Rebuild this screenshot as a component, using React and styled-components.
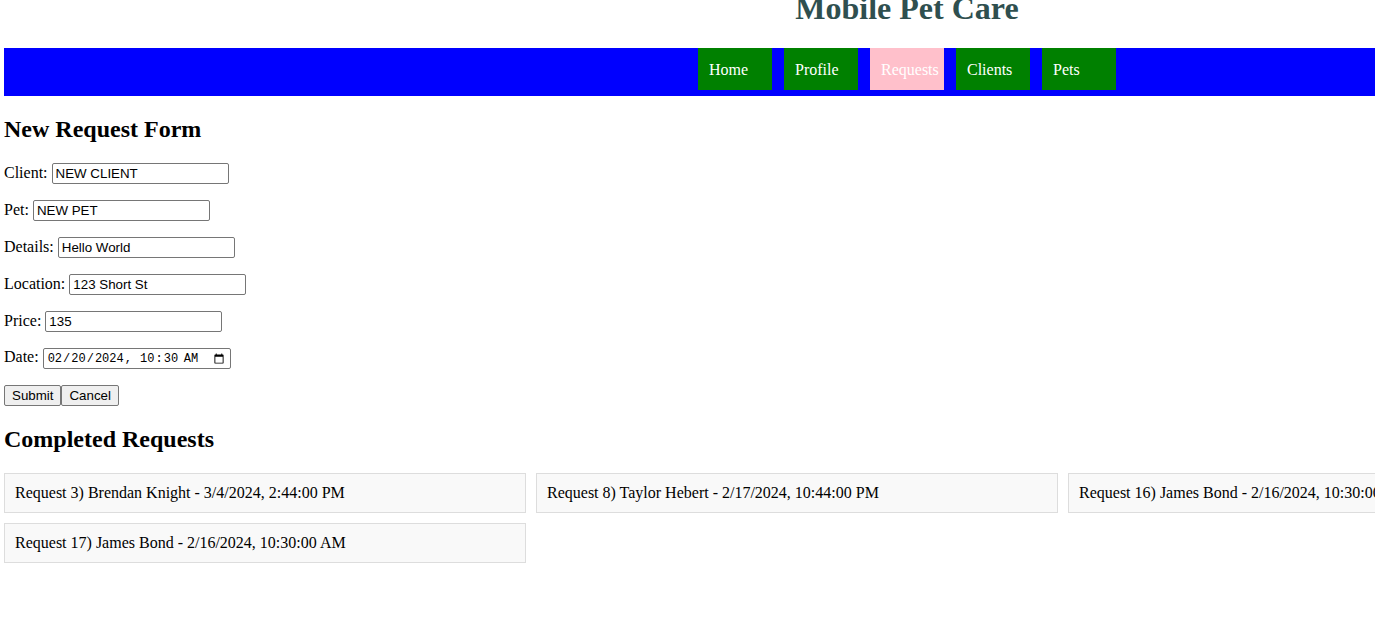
import React from "react";
import styled, { createGlobalStyle } from "styled-components";

const Global = createGlobalStyle`
  html { overflow: hidden; }
  body {
    margin: 0;
    padding: 0 0 0 4px;
    font-family: "Liberation Serif", "Times New Roman", serif;
    font-size: 16px;
    color: #000;
    background: #fff;
  }
`;

const Page = styled.div`
  width: 1806px;
`;

const Title = styled.h1`
  margin: -10px 0 21px;
  font-size: 32px;
  font-weight: bold;
  text-align: center;
  color: #2f4f4f;
`;

const NavBar = styled.nav`
  display: flex;
  justify-content: center;
  gap: 12px;
  height: 48px;
  background: #0000ff;
`;

const NavItem = styled.a`
  display: flex;
  align-items: center;
  box-sizing: border-box;
  width: 74px;
  height: 42px;
  padding: 2px 0 0 11px;
  white-space: nowrap;
  overflow: hidden;
  color: #fff;
  text-decoration: none;
  background: ${(p) => (p.$active ? "#ffc0cb" : "#008000")};
`;

const Heading = styled.h2`
  font-size: 24px;
  font-weight: bold;
  margin: 19.92px 0;
`;

const Row = styled.p`
  margin: 16px 0;
`;

const Input = styled.input`
  box-sizing: border-box;
  width: ${(p) => p.$w || 177}px;
  height: 21px;
  padding: 1px 3px;
  border: 1px solid #767676;
  border-radius: 2px;
  font-family: ${(p) => (p.$mono ? '"Liberation Mono", monospace' : '"Liberation Sans", Arial, sans-serif')};
  font-size: ${(p) => (p.$mono ? "12px" : "13.33px")};
  color: #000;
  vertical-align: baseline;
`;

const Button = styled.button`
  height: 21px;
  padding: 1px 7px;
  border: 1px solid #767676;
  border-radius: 2px;
  background: #efefef;
  font-family: "Liberation Sans", Arial, sans-serif;
  font-size: 13.33px;
  color: #000;
`;

const Cards = styled.div`
  display: grid;
  grid-template-columns: repeat(3, 522px);
  gap: 10px;
`;

const Card = styled.div`
  box-sizing: border-box;
  height: 40px;
  padding: 10px;
  border: 1px solid #ddd;
  background: #f9f9f9;
  white-space: nowrap;
`;

const navItems = ["Home", "Profile", "Requests", "Clients", "Pets"];
const completed = [
  "Request 3) Brendan Knight - 3/4/2024, 2:44:00 PM",
  "Request 8) Taylor Hebert - 2/17/2024, 10:44:00 PM",
  "Request 16) James Bond - 2/16/2024, 10:30:00 AM",
  "Request 17) James Bond - 2/16/2024, 10:30:00 AM",
];

export default function App() {
  return (
    <Page>
      <Global />
      <Title>Mobile Pet Care</Title>
      <NavBar>
        {navItems.map((n) => (
          <NavItem key={n} $active={n === "Requests"}>
            {n}
          </NavItem>
        ))}
      </NavBar>
      <Heading>New Request Form</Heading>
      <form onSubmit={(e) => e.preventDefault()}>
        <Row>
          Client: <Input defaultValue="NEW CLIENT" />
        </Row>
        <Row>
          Pet: <Input defaultValue="NEW PET" />
        </Row>
        <Row>
          Details: <Input defaultValue="Hello World" />
        </Row>
        <Row>
          Location: <Input defaultValue="123 Short St" />
        </Row>
        <Row>
          Price: <Input defaultValue="135" />
        </Row>
        <Row>
          Date: <Input type="datetime-local" $w={188} $mono defaultValue="2024-02-20T10:30" />
        </Row>
        <Row>
          <Button type="submit">Submit</Button><Button type="button">Cancel</Button>
        </Row>
      </form>
      <Heading>Completed Requests</Heading>
      <Cards>
        {completed.map((c) => (
          <Card key={c}>{c}</Card>
        ))}
      </Cards>
    </Page>
  );
}
